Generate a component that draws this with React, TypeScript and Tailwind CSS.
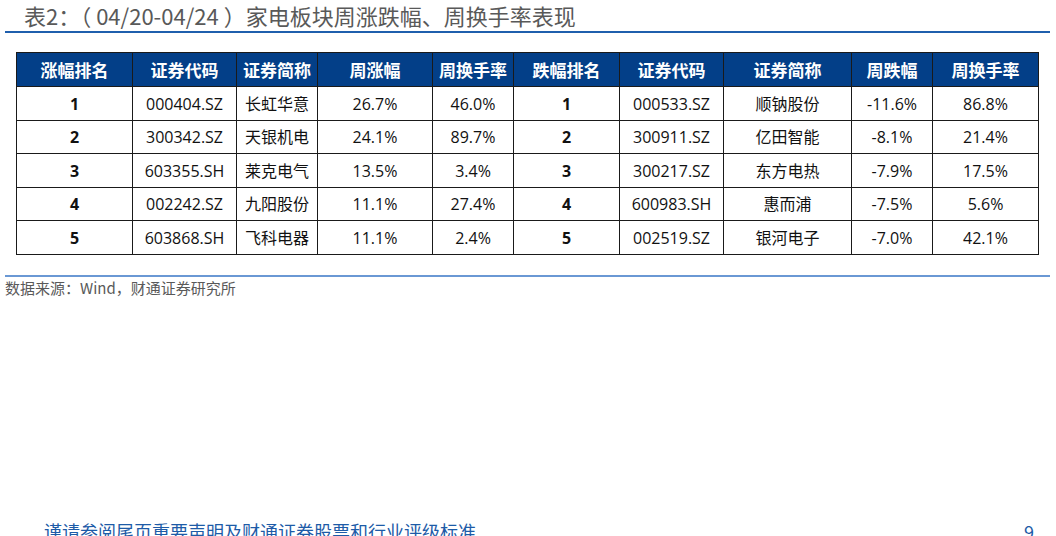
import React from "react";

const cols = [116, 104, 81, 115, 81, 106, 104, 128, 81, 106];
const headers = ["涨幅排名", "证券代码", "证券简称", "周涨幅", "周换手率", "跌幅排名", "证券代码", "证券简称", "周跌幅", "周换手率"];
const rows = [
  ["1", "000404.SZ", "长虹华意", "26.7%", "46.0%", "1", "000533.SZ", "顺钠股份", "-11.6%", "86.8%"],
  ["2", "300342.SZ", "天银机电", "24.1%", "89.7%", "2", "300911.SZ", "亿田智能", "-8.1%", "21.4%"],
  ["3", "603355.SH", "莱克电气", "13.5%", "3.4%", "3", "300217.SZ", "东方电热", "-7.9%", "17.5%"],
  ["4", "002242.SZ", "九阳股份", "11.1%", "27.4%", "4", "600983.SH", "惠而浦", "-7.5%", "5.6%"],
  ["5", "603868.SH", "飞科电器", "11.1%", "2.4%", "5", "002519.SZ", "银河电子", "-7.0%", "42.1%"],
];
const rowH = [34, 33, 34, 33, 34];

const cjk = { fontFamily: '"Noto Sans CJK SC", "Noto Sans", sans-serif' };
const body = { fontFamily: '"Open Sans", "Noto Sans CJK SC", sans-serif' };

export default function App() {
  return (
    <div className="w-[1056px] h-[536px] overflow-hidden bg-white relative" style={cjk}>
      <div className="pl-[24px] pt-[1px] h-[31px] text-[22px] leading-[29px] text-[#595959] whitespace-nowrap">
        表2：（ 04/20-04/24 ）家电板块周涨跌幅、周换手率表现
      </div>
      <div className="ml-[5px] w-[1045px] h-[2px] bg-[#1f5fad]" />
      <div className="h-[19px]" />
      <table className="ml-[16px] border-collapse table-fixed" style={{ width: 1022 }}>
        <colgroup>
          {cols.map((w, i) => (
            <col key={i} style={{ width: w }} />
          ))}
        </colgroup>
        <thead>
          <tr className="h-[34px] bg-[#033f88]">
            {headers.map((h, i) => (
              <th key={i} className="border border-[#1a1a1a] text-white font-bold text-[17px] text-center p-0 whitespace-nowrap">
                {h}
              </th>
            ))}
          </tr>
        </thead>
        <tbody>
          {rows.map((r, ri) => (
            <tr key={ri} style={{ height: rowH[ri] }}>
              {r.map((c, ci) => (
                <td
                  key={ci}
                  className={`border border-[#1a1a1a] text-center p-0 text-[16px] text-[#111] whitespace-nowrap ${
                    ci === 0 || ci === 5 ? "font-bold" : ""
                  } ${ci === 9 ? "border-l-[#777]" : ""}`}
                  style={body}
                >
                  {c}
                </td>
              ))}
            </tr>
          ))}
        </tbody>
      </table>
      <div className="h-[20px]" />
      <div className="ml-[5px] w-[1045px] h-[2px] bg-[#6a98d4]" />
      <div className="pl-[5px] pt-[1px] text-[15px] leading-[19px] text-[#595959]">数据来源：Wind，财通证券研究所</div>
      <div className="flex justify-between pl-[44px] pr-[22px] mt-[224px] text-[18px] leading-[20px] text-[#1d5ba7] whitespace-nowrap">
        <span>谨请参阅尾页重要声明及财通证券股票和行业评级标准</span>
        <span>9</span>
      </div>
    </div>
  );
}
